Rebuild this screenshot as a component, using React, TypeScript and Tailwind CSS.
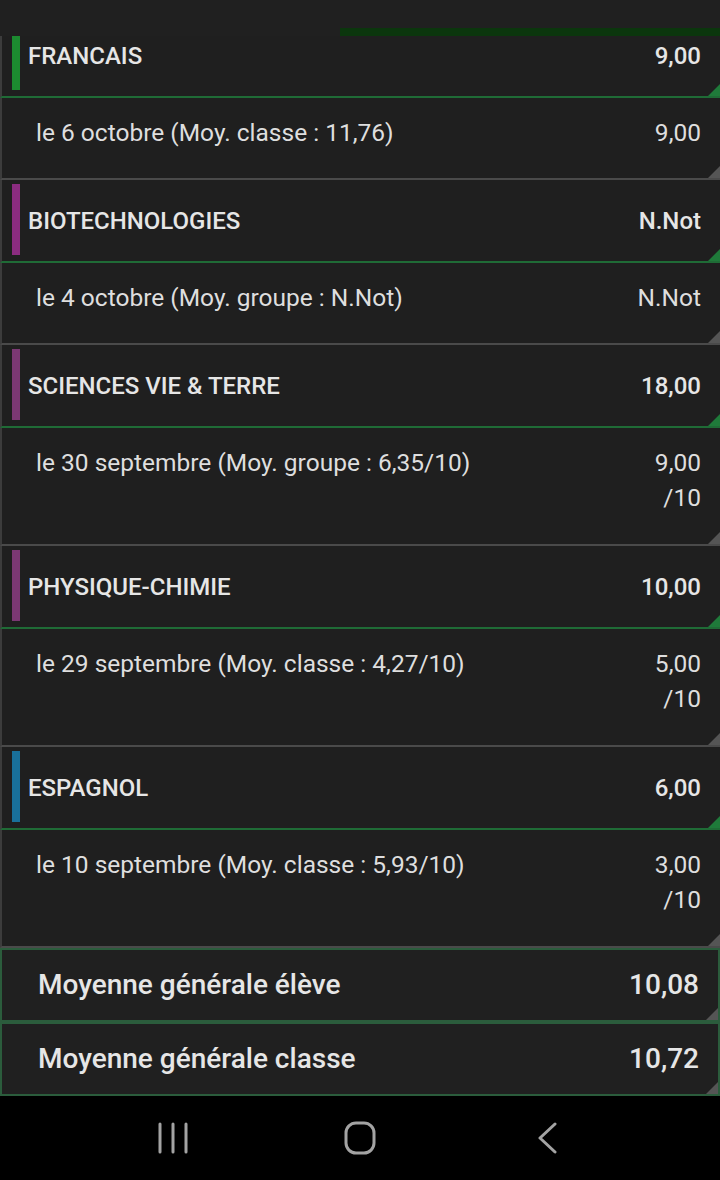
type Grade = { label: string; value: string; outOf?: string };
type Subject = { name: string; avg: string; color: string; grades: Grade[] };

const subjects: Subject[] = [
  {
    name: "FRANCAIS",
    avg: "9,00",
    color: "#1c8a30",
    grades: [{ label: "le 6 octobre (Moy. classe : 11,76)", value: "9,00" }],
  },
  {
    name: "BIOTECHNOLOGIES",
    avg: "N.Not",
    color: "#8b2c80",
    grades: [{ label: "le 4 octobre (Moy. groupe : N.Not)", value: "N.Not" }],
  },
  {
    name: "SCIENCES VIE & TERRE",
    avg: "18,00",
    color: "#7b3873",
    grades: [
      { label: "le 30 septembre (Moy. groupe : 6,35/10)", value: "9,00", outOf: "/10" },
    ],
  },
  {
    name: "PHYSIQUE-CHIMIE",
    avg: "10,00",
    color: "#7b3873",
    grades: [
      { label: "le 29 septembre (Moy. classe : 4,27/10)", value: "5,00", outOf: "/10" },
    ],
  },
  {
    name: "ESPAGNOL",
    avg: "6,00",
    color: "#19709a",
    grades: [
      { label: "le 10 septembre (Moy. classe : 5,93/10)", value: "3,00", outOf: "/10" },
    ],
  },
];

function Corner({ color }: { color: string }) {
  return (
    <div
      className="absolute right-0 bottom-0 w-3 h-3 [clip-path:polygon(100%_0,100%_100%,0_100%)]"
      style={{ backgroundColor: color }}
    />
  );
}

function SubjectHeader({ subject, first }: { subject: Subject; first?: boolean }) {
  return (
    <div
      className={`relative h-[83px] shrink-0 flex items-stretch bg-[#1f1f1f] border-l-2 border-l-[#3c3c3c] border-b-2 border-b-[#1f6b36] ${
        first ? "-mt-[21px]" : ""
      }`}
    >
      <div className="pl-[10px] pt-[4px] pb-[6px] flex">
        <div className="w-2 h-full" style={{ backgroundColor: subject.color }} />
      </div>
      <div className="flex-1 flex items-center justify-between pl-[8px] pr-[19px] text-[24px] font-medium text-[#e6e6e6]">
        <span>{subject.name}</span>
        <span>{subject.avg}</span>
      </div>
      <Corner color="#1f7a3a" />
    </div>
  );
}

function GradeRow({ grade }: { grade: Grade }) {
  return (
    <div
      className={`relative shrink-0 flex justify-between bg-[#1f1f1f] border-l-2 border-l-[#3c3c3c] border-b-2 border-b-[#4a4a4a] pl-[34px] pr-[19px] pt-[17px] text-[24.5px] leading-[35px] text-[#dedede] ${
        grade.outOf ? "h-[118px]" : "h-[82px]"
      }`}
    >
      <span>{grade.label}</span>
      <div className="flex flex-col items-end">
        <span>{grade.value}</span>
        {grade.outOf && <span>{grade.outOf}</span>}
      </div>
      <Corner color="#555555" />
    </div>
  );
}

function Average({ label, value }: { label: string; value: string }) {
  return (
    <div className="relative h-[74px] shrink-0 flex items-center justify-between bg-[#202020] border-2 border-[#2b5c3c] pl-[36px] pr-[19px] text-[28px] font-medium text-[#e6e6e6]">
      <span>{label}</span>
      <span>{value}</span>
      <Corner color="#555555" />
    </div>
  );
}

export default function App() {
  return (
    <div
      className="w-[720px] h-[1180px] flex flex-col bg-[#202020] overflow-hidden"
      style={{ fontFamily: "Roboto, 'Liberation Sans', sans-serif" }}
    >
      {/* bout de la ligne précédente */}
      <div className="h-9 shrink-0 flex flex-col justify-end">
        <div className="h-2 ml-[340px] bg-[#0b360d]" />
      </div>

      <div className="flex-1 flex flex-col overflow-hidden">
        {subjects.map((s, i) => (
          <div key={s.name} className="flex flex-col">
            <SubjectHeader subject={s} first={i === 0} />
            {s.grades.map((g) => (
              <GradeRow key={g.label} grade={g} />
            ))}
          </div>
        ))}
        <Average label="Moyenne générale élève" value="10,08" />
        <Average label="Moyenne générale classe" value="10,72" />
      </div>

      {/* barre de navigation android */}
      <div className="h-[84px] shrink-0 bg-black flex items-center justify-center gap-[156px] text-[#a3a3a3]">
        <svg width="30" height="32" viewBox="0 0 30 32" fill="none" stroke="currentColor" strokeWidth="3" strokeLinecap="round">
          <path d="M2 2v28M15 2v28M28 2v28" />
        </svg>
        <svg width="32" height="34" viewBox="0 0 32 34" fill="none" stroke="currentColor" strokeWidth="3">
          <rect x="2" y="2" width="28" height="30" rx="10" />
        </svg>
        <svg width="30" height="32" viewBox="0 0 30 32" fill="none" stroke="currentColor" strokeWidth="3" strokeLinecap="round" strokeLinejoin="round">
          <path d="M23 2L8 16l15 14" />
        </svg>
      </div>
    </div>
  );
}
